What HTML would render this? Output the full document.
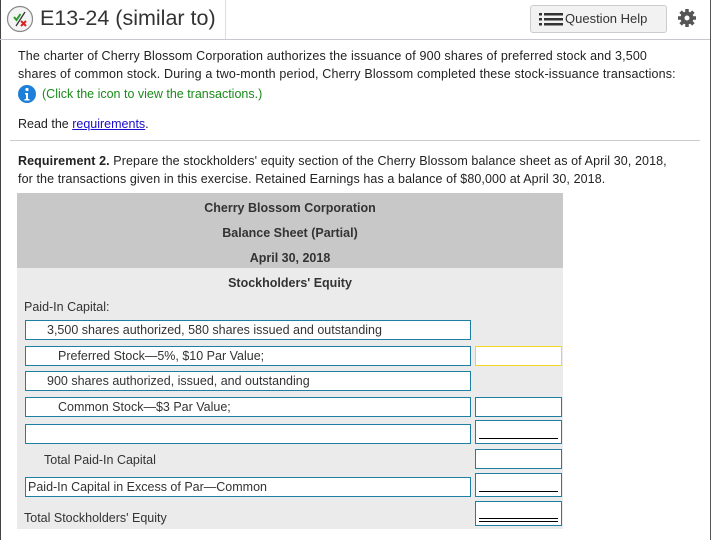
<!DOCTYPE html>
<html><head><style>
*{margin:0;padding:0;box-sizing:border-box}
body{width:713px;height:540px;background:#fff;font-family:"Liberation Sans",sans-serif;position:relative;overflow:hidden;color:#222}
.a{position:absolute}
.t{font-size:12.5px;line-height:18px}
.box{position:absolute;background:#fff;border:1px solid #1f7fa3;height:20px;font-size:12.5px;line-height:18px;color:#333}
.lbl{font-size:12.5px;color:#333;position:absolute}
</style></head><body>
<div class="a" style="left:0;top:0;width:1px;height:540px;background:#444"></div>
<div class="a" style="left:710px;top:0;width:1px;height:540px;background:#555"></div>
<div class="a" style="left:0;top:39px;width:710px;height:1px;background:#c8c8d0"></div>
<div class="a" style="left:225px;top:0;width:1px;height:39px;background:#ddd"></div>
<svg class="a" style="left:6px;top:5px" width="28" height="28"><circle cx="14" cy="14" r="12.5" fill="#f4f4f4" stroke="#888" stroke-width="1.2"/><path d="M8 12l2.5 3 4-6" stroke="#2a9a2a" stroke-width="2" fill="none"/><path d="M10 21l9-14" stroke="#333" stroke-width="1.3"/><path d="M15 16l5 5M20 16l-5 5" stroke="#d22" stroke-width="2"/></svg>
<div class="a" style="left:40px;top:6px;font-size:21.5px;color:#333">E13-24 (similar to)</div>
<div class="a" style="left:530px;top:5px;width:137px;height:28px;border:1px solid #ccc;border-radius:3px;background:#f2f2f2"></div>
<svg class="a" style="left:539px;top:13px" width="24" height="13"><g fill="#333"><rect x="0" y="0" width="3" height="2.5"/><rect x="0" y="5" width="3" height="2.5"/><rect x="0" y="10" width="3" height="2.5"/><rect x="5" y="0" width="19" height="2.5"/><rect x="5" y="5" width="19" height="2.5"/><rect x="5" y="10" width="19" height="2.5"/></g></svg>
<div class="a" style="left:565px;top:11px;font-size:13px;color:#333">Question Help</div>
<svg class="a" style="left:677px;top:8px" width="20" height="20" viewBox="0 0 20 20"><g fill="#555"><circle cx="10" cy="10" r="6.5"/><g stroke="#555" stroke-width="3.5"><path d="M10 1v18M1 10h18M3.6 3.6l12.8 12.8M16.4 3.6L3.6 16.4"/></g></g><circle cx="10" cy="10" r="2.5" fill="#fff"/></svg>
<div class="a t" style="left:18px;top:47px;width:690px;letter-spacing:0.15px">The charter of Cherry Blossom Corporation authorizes the issuance of 900 shares of preferred stock and 3,500<br>shares of common stock. During a two-month period, Cherry Blossom completed these stock-issuance transactions:</div>
<svg class="a" style="left:18px;top:85px" width="18" height="18"><circle cx="9" cy="9" r="9" fill="#1d7fd8"/><circle cx="9" cy="4.5" r="1.6" fill="#fff"/><path d="M7 8h3v6h1.5v1.5h-5V14H8V9.5H7z" fill="#fff"/></svg>
<div class="a t" style="left:42px;top:85px;color:#1a8a1a">(Click the icon to view the transactions.)</div>
<div class="a t" style="left:18px;top:115px">Read the <span style="color:#1a0dcc;text-decoration:underline">requirements</span>.</div>
<div class="a" style="left:10px;top:140px;width:690px;height:1px;background:#ccc"></div>
<div class="a t" style="left:18px;top:152px;width:690px;letter-spacing:0.1px"><b>Requirement 2.</b> Prepare the stockholders' equity section of the Cherry Blossom balance sheet as of April 30, 2018,<br>for the transactions given in this exercise. Retained Earnings has a balance of $80,000 at April 30, 2018.</div>
<div class="a" style="left:17px;top:193px;width:546px;height:75px;background:#c8c8c8"></div>
<div class="a" style="left:17px;top:268px;width:546px;height:261px;background:#ebebeb"></div>
<div class="a" style="left:17px;top:196px;width:546px;text-align:center;font-size:12.5px;font-weight:bold;color:#333;line-height:25px">Cherry Blossom Corporation<br>Balance Sheet (Partial)<br>April 30, 2018<br>Stockholders' Equity</div>
<div class="lbl" style="left:24px;top:300px">Paid-In Capital:</div>
<div class="box" style="left:25px;top:320px;width:446px;padding-left:21px">3,500 shares authorized, 580 shares issued and outstanding</div>
<div class="box" style="left:25px;top:346px;width:446px;padding-left:32px">Preferred Stock—5%, $10 Par Value;</div>
<div class="box" style="left:475px;top:346px;width:87px;border-color:#f0d820"></div>
<div class="box" style="left:25px;top:371px;width:446px;padding-left:21px">900 shares authorized, issued, and outstanding</div>
<div class="box" style="left:25px;top:397px;width:446px;padding-left:32px">Common Stock—$3 Par Value;</div>
<div class="box" style="left:475px;top:397px;width:87px"></div>
<div class="box" style="left:25px;top:424px;width:446px"></div>
<div class="box" style="left:475px;top:420px;width:87px;height:24px"><div class="a" style="left:3px;top:17px;width:79px;height:1px;background:#000"></div></div>
<div class="lbl" style="left:44px;top:453px">Total Paid-In Capital</div>
<div class="box" style="left:475px;top:449px;width:87px"></div>
<div class="box" style="left:25px;top:477px;width:446px;padding-left:2px">Paid-In Capital in Excess of Par—Common</div>
<div class="box" style="left:475px;top:473px;width:87px;height:24px"><div class="a" style="left:3px;top:17px;width:79px;height:1px;background:#000"></div></div>
<div class="lbl" style="left:24px;top:511px">Total Stockholders' Equity</div>
<div class="box" style="left:475px;top:501px;width:87px;height:25px"><div class="a" style="left:3px;top:16px;width:79px;height:1px;background:#000"></div><div class="a" style="left:3px;top:19px;width:79px;height:1px;background:#000"></div></div>
</body></html>
